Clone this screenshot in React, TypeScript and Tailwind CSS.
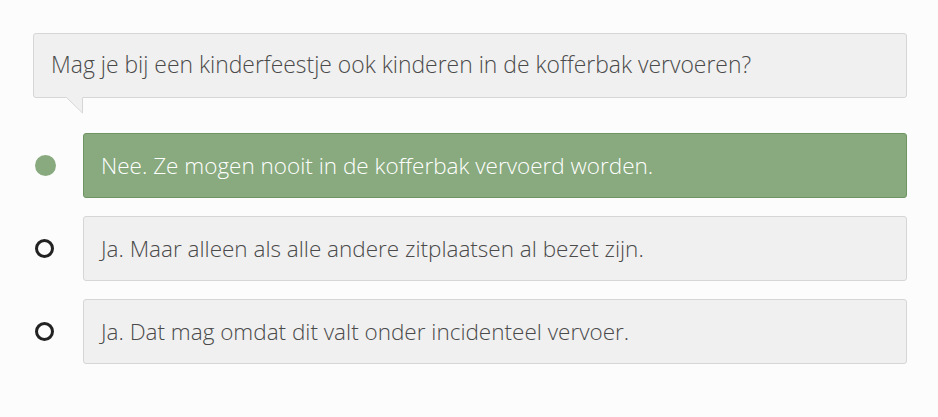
import React, { useState } from 'react';

const answers = [
  'Nee. Ze mogen nooit in de kofferbak vervoerd worden.',
  'Ja. Maar alleen als alle andere zitplaatsen al bezet zijn.',
  'Ja. Dat mag omdat dit valt onder incidenteel vervoer.',
];

export default function App() {
  const [selected, setSelected] = useState(0);

  return (
    <div
      className="min-h-[417px] w-full bg-[#fcfcfc] pl-[33px] pr-[31px] pt-[33px] text-[#4a4a4a] font-light"
      style={{ fontFamily: '"Open Sans", "Liberation Sans", sans-serif' }}
    >
      {/* Question bubble */}
      <div className="relative">
        <div className="flex h-[65px] items-center rounded-[3px] border border-[#d6d6d6] bg-[#f0f0f0] px-[17px] text-[22.9px]">
          Mag je bij een kinderfeestje ook kinderen in de kofferbak vervoeren?
        </div>
        <svg className="absolute left-[33px] top-[63px]" width="18" height="18" viewBox="0 0 18 18">
          <polygon points="0,1 17,1 17,17" fill="#f0f0f0" />
          <polyline points="0.5,1.5 16.5,17 16.5,1.5" fill="none" stroke="#d6d6d6" strokeWidth="1" />
        </svg>
      </div>

      {/* Answers */}
      <div className="mt-[35px] flex flex-col gap-[18px]">
        {answers.map((a, i) => {
          const active = selected === i;
          return (
            <div key={i} className="flex items-center cursor-pointer" onClick={() => setSelected(i)}>
              <div className="flex w-[50px] shrink-0 items-center">
                {active ? (
                  <span className="ml-[2px] h-[21px] w-[21px] rounded-full bg-[#88aa7e]" />
                ) : (
                  <span className="ml-[2px] h-[19px] w-[19px] rounded-full border-[3px] border-[#222]" />
                )}
              </div>
              <div
                className={`flex h-[65px] flex-1 items-center rounded-[3px] border px-[17px] text-[22.5px] ${
                  active ? 'border-[#6f9464] bg-[#88aa7e] text-white' : 'border-[#d6d6d6] bg-[#f0f0f0] text-[#4a4a4a]'
                }`}
              >
                {a}
              </div>
            </div>
          );
        })}
      </div>
    </div>
  );
}
